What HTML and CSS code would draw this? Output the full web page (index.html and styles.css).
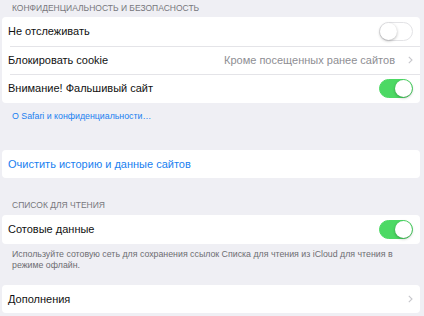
FILE: index.html
```html
<!DOCTYPE html>
<html lang="ru">
<head>
  <meta charset="UTF-8">
  <title>Safari</title>
  <link rel="stylesheet" href="styles.css">
</head>
<body>
  <div class="section-title first">КОНФИДЕНЦИАЛЬНОСТЬ И БЕЗОПАСНОСТЬ</div>
  <div class="group">
    <div class="row">
      <span class="label">Не отслеживать</span>
      <span class="switch"></span>
    </div>
    <div class="row">
      <span class="label">Блокировать cookie</span>
      <span class="value">Кроме посещенных ранее сайтов</span>
      <svg class="chevron" width="5" height="8" viewBox="0 0 5 8"><path d="M0.8 0.8 L4 4 L0.8 7.2" fill="none" stroke="#c7c7cc" stroke-width="1.1"/></svg>
    </div>
    <div class="row">
      <span class="label">Внимание! Фальшивый сайт</span>
      <span class="switch on"></span>
    </div>
  </div>
  <div class="footnote link">О Safari и конфиденциальности…</div>

  <div class="group">
    <div class="row">
      <span class="label action">Очистить историю и данные сайтов</span>
    </div>
  </div>

  <div class="section-title">СПИСОК ДЛЯ ЧТЕНИЯ</div>
  <div class="group">
    <div class="row">
      <span class="label">Сотовые данные</span>
      <span class="switch on"></span>
    </div>
  </div>
  <div class="footnote">Используйте сотовую сеть для сохранения ссылок Списка для чтения из iCloud для чтения в режиме офлайн.</div>

  <div class="group">
    <div class="row">
      <span class="label">Дополнения</span>
      <svg class="chevron" width="5" height="8" viewBox="0 0 5 8"><path d="M0.8 0.8 L4 4 L0.8 7.2" fill="none" stroke="#c7c7cc" stroke-width="1.1"/></svg>
    </div>
  </div>
</body>
</html>
```

FILE: styles.css
```css
* {
  box-sizing: border-box;
  margin: 0;
  padding: 0;
}

body {
  background-color: #efeff4;
  font-family: "Liberation Sans", Arial, sans-serif;
  padding: 0 4px 0 2px;
  width: 424px;
  height: 316px;
  overflow: hidden;
}

.section-title {
  font-size: 8.5px;
  color: #77777c;
  padding: 22px 10px 4px;
  line-height: 11px;
}

.section-title.first {
  padding-top: 3px;
  padding-bottom: 3px;
}

.group {
  background-color: #ffffff;
  border-radius: 4px;
}

.row {
  display: flex;
  align-items: center;
  height: 28.5px;
  padding: 0 6px;
  position: relative;
}

.row + .row::before {
  content: "";
  position: absolute;
  top: 0;
  left: 8px;
  right: 0;
  border-top: 1px solid #e4e4e8;
}

.label {
  flex: 1;
  font-size: 11px;
  color: #111111;
}

.label.action {
  color: #1a7ff0;
  font-size: 11px;
}

.value {
  font-size: 11px;
  color: #8e8e93;
  margin-right: 13px;
}

.chevron {
  margin-right: 1px;
}

.switch {
  width: 34px;
  height: 19px;
  border-radius: 10px;
  border: 1px solid #e3e3e6;
  background-color: #ffffff;
  position: relative;
  margin-right: 1px;
}

.switch::after {
  content: "";
  position: absolute;
  top: 0;
  left: 0;
  width: 17px;
  height: 17px;
  border-radius: 50%;
  background-color: #ffffff;
  box-shadow: 0 1px 3px rgba(0, 0, 0, 0.3);
}

.switch.on {
  background-color: #4cd964;
  border-color: #4cd964;
}

.switch.on::after {
  left: auto;
  right: 0;
}

.footnote {
  font-size: 8.8px;
  color: #6d6d72;
  line-height: 11px;
  padding: 5px 8px 14px 10px;
}

.footnote.link {
  color: #1a7ff0;
  padding: 8px 8px 28px 10px;
}
```
